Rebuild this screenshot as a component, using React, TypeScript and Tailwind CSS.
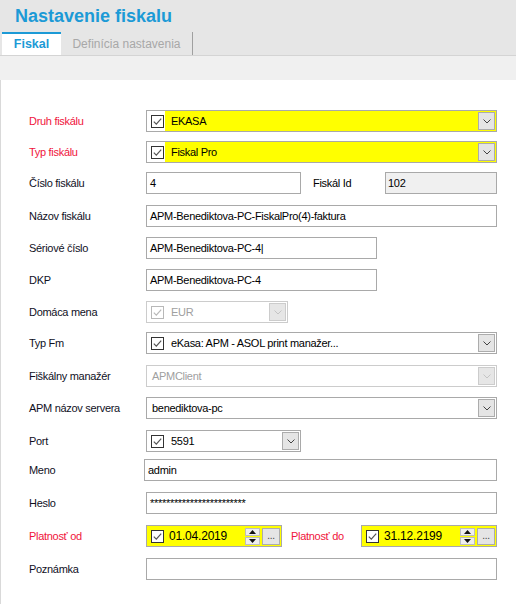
import React from "react";

const FONT = "font-['Liberation_Sans',Arial,sans-serif]";

function CheckBox({ disabled }: { disabled?: boolean }) {
  const c = disabled ? "#b8b8b8" : "#333333";
  const m = disabled ? "#b8b8b8" : "#555555";
  return (
    <svg width="13" height="13" viewBox="0 0 13 13" className="shrink-0">
      <rect x="0.5" y="0.5" width="12" height="12" fill="#ffffff" stroke={c} />
      <path d="M2.8 6.6 L5.3 9.1 L10.2 3.6" fill="none" stroke={m} strokeWidth="1.2" />
    </svg>
  );
}

function Chevron({ disabled }: { disabled?: boolean }) {
  return (
    <svg width="8" height="5" viewBox="0 0 8 5">
      <path d="M0.5 0.5 L4 4 L7.5 0.5" fill="none" stroke={disabled ? "#c4c4c4" : "#444444"} strokeWidth="1" />
    </svg>
  );
}

function DropButton({ disabled }: { disabled?: boolean }) {
  return (
    <div
      className={
        "ml-auto mr-[1px] w-[17px] h-[18px] shrink-0 flex items-center justify-center border " +
        (disabled ? "bg-[#e6e6e6] border-[#cccccc]" : "bg-[#e5e5e5] border-[#acacac]")
      }
    >
      <Chevron disabled={disabled} />
    </div>
  );
}

function Combo({
  w,
  value,
  yellow,
  disabled,
  check = true,
}: {
  w: string;
  value: string;
  yellow?: boolean;
  disabled?: boolean;
  check?: boolean;
}) {
  return (
    <div
      className={
        w +
        " h-[22px] border flex items-center " +
        (disabled ? "border-[#cccccc] " : "border-[#a9a9a9] ") +
        (yellow ? "bg-[#ffff00]" : "bg-white")
      }
    >
      {check && (
        <div className="w-[18px] h-full bg-white flex items-center justify-center shrink-0 pl-[2px]">
          <CheckBox disabled={disabled} />
        </div>
      )}
      <span
        className={
          (check ? "ml-[6px] " : "ml-[5px] ") +
          (disabled ? "text-[#a0a0a0]" : "text-black") +
          " whitespace-nowrap"
        }
      >
        {value}
      </span>
      <DropButton disabled={disabled} />
    </div>
  );
}

function TextBox({ w, value, grey, cls }: { w: string; value: string; grey?: boolean; cls?: string }) {
  return (
    <div
      className={
        w +
        " h-[22px] border border-[#a9a9a9] flex items-center px-[3px] whitespace-nowrap " +
        (grey ? "bg-[#f0f0f0] " : "bg-white ") +
        (cls || "")
      }
    >
      {value}
    </div>
  );
}

function Spin() {
  return (
    <div className="flex flex-col gap-[1px] shrink-0">
      <div className="w-[15px] h-[8px] bg-[#eeeeee] border border-[#bdbdbd] flex items-center justify-center">
        <svg width="7" height="4" viewBox="0 0 7 4">
          <path d="M0 4 L3.5 0 L7 4 Z" fill="#111111" />
        </svg>
      </div>
      <div className="w-[15px] h-[8px] bg-[#eeeeee] border border-[#bdbdbd] flex items-center justify-center">
        <svg width="7" height="4" viewBox="0 0 7 4">
          <path d="M0 0 L7 0 L3.5 4 Z" fill="#111111" />
        </svg>
      </div>
    </div>
  );
}

function DateBox({ w, value }: { w: string; value: string }) {
  return (
    <div className={w + " h-[22px] border border-[#a9a9a9] bg-[#ffff00] flex items-center pl-[4px] pr-[1px]"}>
      <CheckBox />
      <span className="ml-[5px] whitespace-nowrap text-[12px] tracking-[-0.2px]">{value}</span>
      <div className="ml-auto flex items-center gap-[2px]">
        <Spin />
        <div className="w-[18px] h-[17px] bg-[#e5e5e5] border border-[#acacac] flex items-end justify-center pb-[3px] text-[#444] text-[10px] leading-none">
          ...
        </div>
      </div>
    </div>
  );
}

function Row({ label, red, h, children }: { label: string; red?: boolean; h: string; children: React.ReactNode }) {
  return (
    <div className={h + " flex items-start"}>
      <div className={"w-[117px] h-[22px] flex items-center shrink-0 " + (red ? "text-[#f0143c]" : "text-[#10101e]")}>
        {label}
      </div>
      {children}
    </div>
  );
}

export default function App() {
  return (
    <div className={FONT + " w-[516px] h-[604px] bg-white overflow-hidden text-[11px] tracking-[-0.3px] text-black"}>
      {/* Header */}
      <div className="bg-[#e6e6e6] h-[32px] flex items-center pl-[15px]">
        <h1 className="text-[18px] font-bold text-[#1c9ad6] tracking-normal leading-none">Nastavenie fiskalu</h1>
      </div>
      <div className="bg-[#e6e6e6] h-[24px] flex items-stretch pl-[2px] border-b border-[#d4d4d4]">
        <div className="w-[59px] bg-white border-t-2 border-[#1c9ad6] flex items-center justify-center text-[12.5px] font-bold text-[#1c9ad6] tracking-normal">
          Fiskal
        </div>
        <div className="w-[132px] flex items-center justify-center text-[12px] text-[#a8a8a8] tracking-normal border-r border-[#a0a0a0]">
          Definícia nastavenia
        </div>
      </div>
      <div className="h-[24px] bg-[#f0f0f0]" />

      {/* Panel */}
      <div className="bg-white border-l border-[#d9d9d9] h-full pt-[30px] pl-[28px]">
        <Row label="Druh fiskálu" red h="h-[31px]">
          <Combo w="w-[351px]" value="EKASA" yellow />
        </Row>
        <Row label="Typ fiskálu" red h="h-[31px]">
          <Combo w="w-[351px]" value="Fiskal Pro" yellow />
        </Row>
        <Row label="Číslo fiskálu" h="h-[33px]">
          <TextBox w="w-[155px]" value="4" />
          <div className="w-[84px] h-[22px] flex items-center pl-[12px] shrink-0">Fiskál Id</div>
          <TextBox w="w-[112px]" value="102" grey cls="pl-[2px]" />
        </Row>
        <Row label="Názov fiskálu" h="h-[32px]">
          <TextBox w="w-[351px]" value="APM-Benediktova-PC-FiskalPro(4)-faktura" />
        </Row>
        <Row label="Sériové číslo" h="h-[32px]">
          <TextBox w="w-[231px]" value="APM-Benediktova-PC-4|" />
        </Row>
        <Row label="DKP" h="h-[32px]">
          <TextBox w="w-[231px]" value="APM-Benediktova-PC-4" />
        </Row>
        <Row label="Domáca mena" h="h-[31px]">
          <Combo w="w-[142px]" value="EUR" disabled />
        </Row>
        <Row label="Typ Fm" h="h-[33px]">
          <Combo w="w-[351px]" value="eKasa: APM - ASOL print manažer..." />
        </Row>
        <Row label="Fiškálny manažér" h="h-[32px]">
          <Combo w="w-[351px]" value="APMClient" disabled check={false} />
        </Row>
        <Row label="APM názov servera" h="h-[33px]">
          <Combo w="w-[351px]" value="benediktova-pc" check={false} />
        </Row>
        <Row label="Port" h="h-[29px]">
          <Combo w="w-[155px]" value="5591" />
        </Row>
        <Row label="Meno" h="h-[33px]">
          <TextBox w="w-[353px]" value="admin" cls="-ml-[2px]" />
        </Row>
        <Row label="Heslo" h="h-[33px]">
          <TextBox w="w-[351px]" value="************************" />
        </Row>
        <Row label="Platnosť od" red h="h-[33px]">
          <DateBox w="w-[136px]" value="01.04.2019" />
          <div className="w-[79px] h-[22px] flex items-center pl-[9px] shrink-0 text-[#f0143c]">Platnosť do</div>
          <DateBox w="w-[136px]" value="31.12.2199" />
        </Row>
        <Row label="Poznámka" h="h-[33px]">
          <TextBox w="w-[351px]" value="" />
        </Row>
      </div>
    </div>
  );
}
